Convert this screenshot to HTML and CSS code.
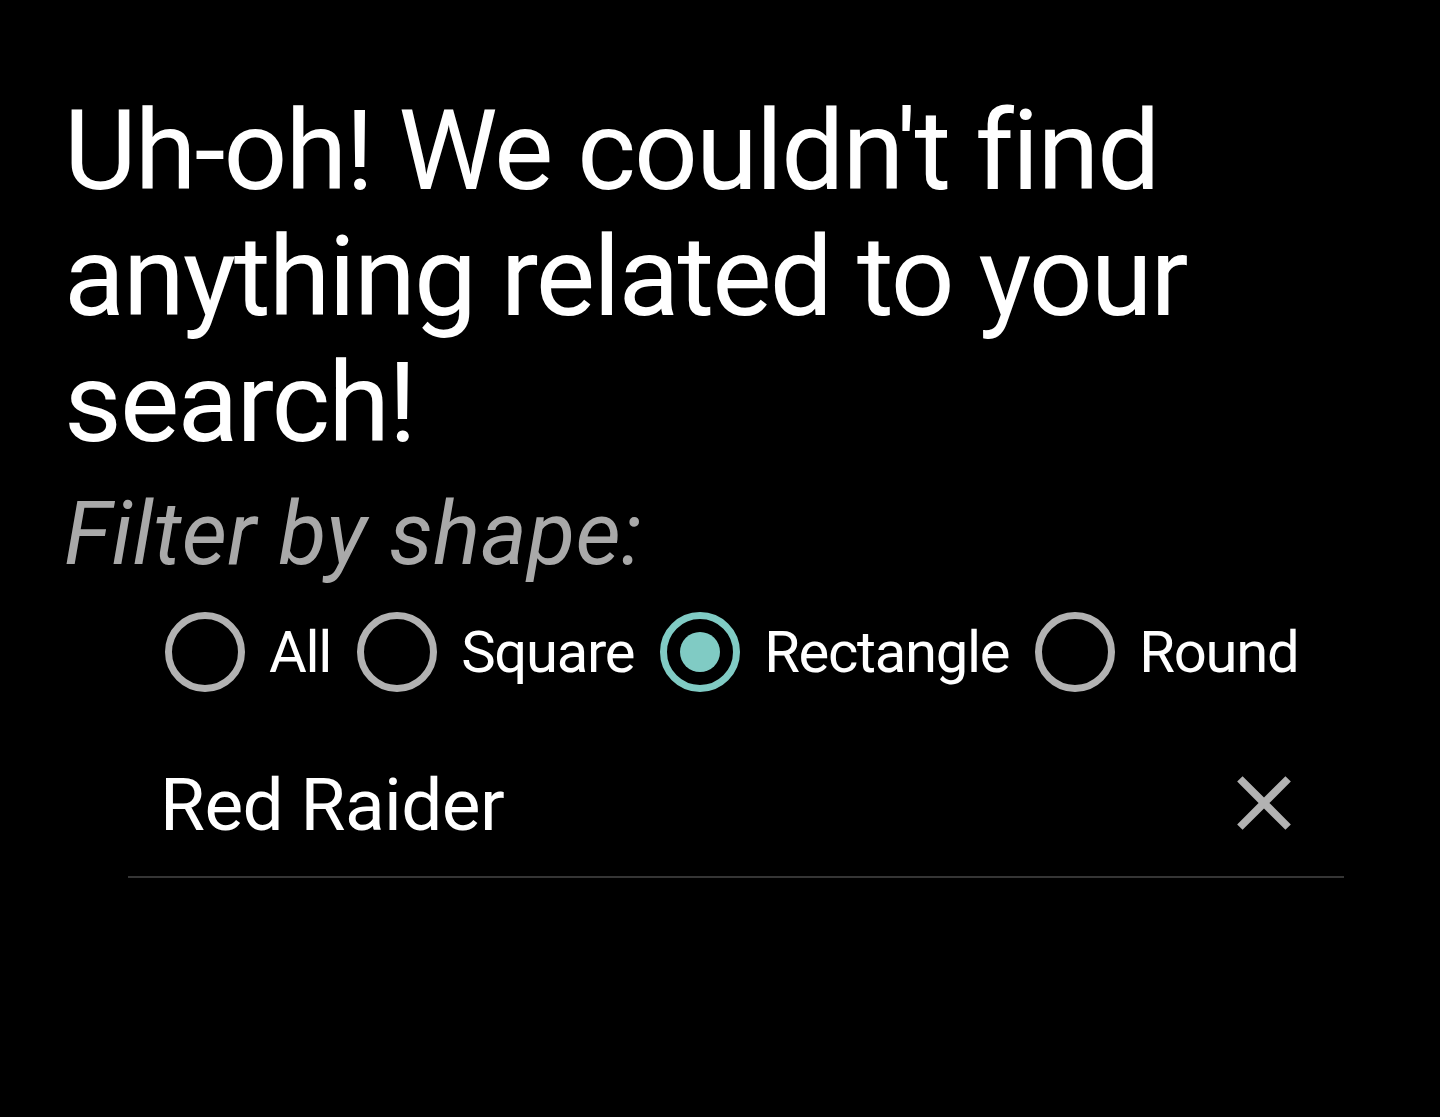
FILE: index.html
```html
<!DOCTYPE html>
<html lang="en">
<head>
<meta charset="utf-8">
<title>No results</title>
<link rel="stylesheet" href="styles.css">
</head>
<body>
<main class="page">
  <h1 class="title">Uh-oh! We couldn't find anything related to your search!</h1>
  <p class="filter-label">Filter by shape:</p>
  <div class="radio-group" role="radiogroup">
    <label class="radio"><span class="radio-ring"></span><span class="radio-text">All</span></label>
    <label class="radio"><span class="radio-ring"></span><span class="radio-text">Square</span></label>
    <label class="radio is-checked"><span class="radio-ring"><span class="radio-dot"></span></span><span class="radio-text">Rectangle</span></label>
    <label class="radio"><span class="radio-ring"></span><span class="radio-text">Round</span></label>
  </div>
  <div class="search-field">
    <span class="search-value">Red Raider</span>
    <svg class="clear-icon" viewBox="0 0 24 24" aria-hidden="true"><path d="M19 6.41L17.59 5 12 10.59 6.41 5 5 6.41 10.59 12 5 17.59 6.41 19 12 13.41 17.59 19 19 17.59 13.41 12z"/></svg>
  </div>
</main>
</body>
</html>
```

FILE: styles.css
```css
html, body {
  margin: 0;
  padding: 0;
  background: #000;
}

body {
  font-family: Roboto, "Noto Sans", "Liberation Sans", sans-serif;
  color: #fff;
  min-height: 1117px;
}

.page {
  padding: 88px 0 0 64px;
  display: flex;
  flex-direction: column;
  align-items: flex-start;
}

.title {
  margin: 0;
  font-size: 112px;
  line-height: 126px;
  font-weight: 400;
  letter-spacing: -1.9px;
  width: 1200px;
}

.filter-label {
  margin: 18px 0 0 0;
  font-size: 88px;
  line-height: 100px;
  font-style: italic;
  letter-spacing: 0.3px;
  color: #a9a9a9;
}

.radio-group {
  margin: 28px 0 0 101px;
  display: flex;
  align-items: center;
  gap: 26px;
}

.radio {
  display: flex;
  align-items: center;
  gap: 24px;
}

.radio-ring {
  box-sizing: border-box;
  width: 80px;
  height: 80px;
  border: 7px solid #b2b2b2;
  border-radius: 50%;
  display: flex;
  align-items: center;
  justify-content: center;
}

.is-checked .radio-ring {
  border-color: #80cbc4;
}

.radio-dot {
  width: 40px;
  height: 40px;
  border-radius: 50%;
  background: #80cbc4;
}

.radio-text {
  font-size: 58px;
  line-height: 68px;
  letter-spacing: -1.3px;
}

.search-field {
  box-sizing: border-box;
  margin: 63px 0 0 64px;
  width: 1216px;
  height: 123px;
  padding: 0 34px 25px 32px;
  display: flex;
  align-items: center;
  justify-content: space-between;
  border-bottom: 2px solid #353535;
}

.search-value {
  font-size: 73px;
  line-height: 96px;
  letter-spacing: -0.6px;
  margin-top: 4px;
}

.clear-icon {
  width: 92px;
  height: 92px;
  fill: #b2b2b2;
}
```
